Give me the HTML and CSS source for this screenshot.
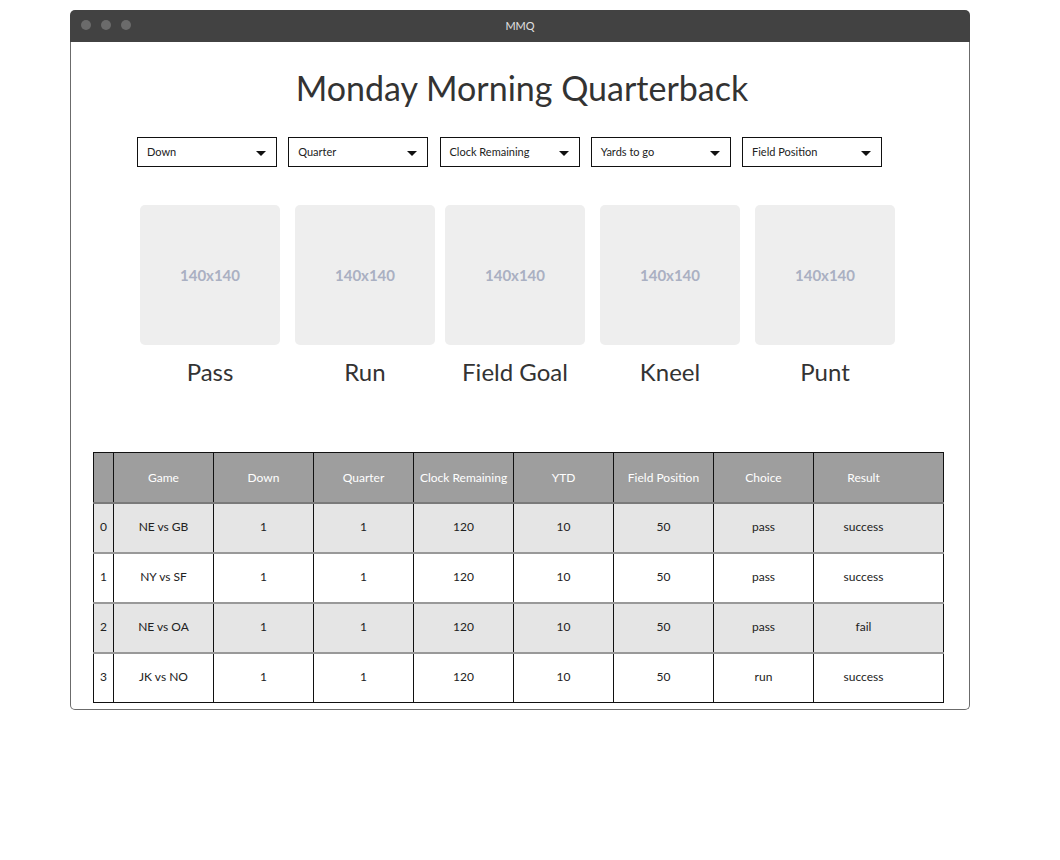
FILE: index.html
```html
<!DOCTYPE html>
<html>
<head>
<meta charset="utf-8">
<title>MMQ</title>
<link rel="stylesheet" href="styles.css">
</head>
<body>
<div class="window">
  <div class="titlebar">
    <div class="dots"><span class="dot"></span><span class="dot"></span><span class="dot"></span></div>
    <div class="wtitle">MMQ</div>
  </div>
  <div class="content">
    <h1 class="heading">Monday Morning Quarterback</h1>
    <div class="filters">
      <div class="select"><span>Down</span><i class="caret"></i></div>
      <div class="select"><span>Quarter</span><i class="caret"></i></div>
      <div class="select"><span>Clock Remaining</span><i class="caret"></i></div>
      <div class="select"><span>Yards to go</span><i class="caret"></i></div>
      <div class="select"><span>Field Position</span><i class="caret"></i></div>
    </div>
    <div class="choices">
      <div class="choice"><div class="thumb">140x140</div><div class="label">Pass</div></div>
      <div class="choice"><div class="thumb">140x140</div><div class="label">Run</div></div>
      <div class="choice narrow"><div class="thumb">140x140</div><div class="label">Field Goal</div></div>
      <div class="choice"><div class="thumb">140x140</div><div class="label">Kneel</div></div>
      <div class="choice"><div class="thumb">140x140</div><div class="label">Punt</div></div>
    </div>
    <table class="plays">
      <thead>
        <tr><th class="idx"></th><th>Game</th><th>Down</th><th>Quarter</th><th>Clock Remaining</th><th>YTD</th><th>Field Position</th><th>Choice</th><th class="last">Result</th></tr>
      </thead>
      <tbody>
        <tr class="alt"><td class="idx">0</td><td>NE vs GB</td><td>1</td><td>1</td><td>120</td><td>10</td><td>50</td><td>pass</td><td class="last">success</td></tr>
        <tr><td class="idx">1</td><td>NY vs SF</td><td>1</td><td>1</td><td>120</td><td>10</td><td>50</td><td>pass</td><td class="last">success</td></tr>
        <tr class="alt"><td class="idx">2</td><td>NE vs OA</td><td>1</td><td>1</td><td>120</td><td>10</td><td>50</td><td>pass</td><td class="last">fail</td></tr>
        <tr class="lastrow"><td class="idx">3</td><td>JK vs NO</td><td>1</td><td>1</td><td>120</td><td>10</td><td>50</td><td>run</td><td class="last">success</td></tr>
      </tbody>
    </table>
  </div>
</div>
</body>
</html>
```

FILE: styles.css
```css
html, body {
  margin: 0;
  padding: 0;
  background: #ffffff;
}
body {
  font-family: "Lato", "Open Sans", "Liberation Sans", sans-serif;
  color: #333333;
  padding-top: 10px;
}
.window {
  width: 900px;
  margin-left: 70px;
}
.titlebar {
  height: 32px;
  background: #424242;
  border-radius: 5px 5px 0 0;
  position: relative;
  display: flex;
  align-items: center;
  justify-content: center;
}
.dots {
  position: absolute;
  left: 11px;
  top: 10px;
  display: flex;
  gap: 10px;
}
.dot {
  width: 10px;
  height: 10px;
  border-radius: 50%;
  background: #6b6b6b;
}
.wtitle {
  color: #e0e0e0;
  font-size: 11px;
  margin-top: -2px;
}
.content {
  height: 668px;
  border: 1px solid #6b6b6b;
  border-top: none;
  border-radius: 0 0 5px 5px;
  box-sizing: border-box;
  padding-top: 24px;
}
.heading {
  margin: 0;
  font-weight: normal;
  font-size: 34px;
  line-height: 44px;
  text-align: center;
  color: #333333;
  padding-left: 4px;
}
.filters {
  display: flex;
  gap: 11.25px;
  margin-top: 27px;
  padding-left: 66px;
}
.select {
  width: 140px;
  height: 30px;
  box-sizing: border-box;
  border: 1px solid #111111;
  display: flex;
  align-items: center;
  justify-content: space-between;
  padding: 0 10px 2px 9px;
  font-size: 11px;
  color: #222222;
}
.caret {
  width: 0;
  height: 0;
  border-left: 5px solid transparent;
  border-right: 5px solid transparent;
  border-top: 5px solid #111111;
  margin-top: 4px;
}
.choices {
  display: flex;
  gap: 15px;
  margin-top: 38px;
  padding-left: 69px;
}
.choice {
  width: 140px;
  display: flex;
  flex-direction: column;
  align-items: center;
}
.choice.narrow {
  margin-left: -5px;
}
.thumb {
  width: 140px;
  height: 140px;
  background: #eeeeee;
  border-radius: 5px;
  display: flex;
  align-items: center;
  justify-content: center;
  color: #aab0c2;
  font-size: 15px;
  font-weight: bold;
}
.label {
  margin-top: 12px;
  font-size: 24px;
  line-height: 30px;
  color: #333333;
}
.plays {
  margin-top: 65px;
  margin-left: 22px;
  border-collapse: collapse;
  width: 851px;
  table-layout: fixed;
  font-size: 12px;
  color: #222222;
  border: 1px solid #111111;
}
.plays th, .plays td {
  width: 100px;
  height: 50px;
  padding: 0;
  text-align: center;
  border-left: 1px solid #111111;
  border-right: 1px solid #111111;
  box-sizing: border-box;
}
.plays th {
  background: #9e9e9e;
  color: #ffffff;
  font-weight: normal;
  border-bottom: 2px solid #7a7a7a;
}
.plays td {
  border-bottom: 2px solid #999999;
  padding-bottom: 3px;
}
.plays tr.lastrow td {
  border-bottom: 1px solid #111111;
}
.plays .idx {
  width: 20px;
}
.plays .last {
  width: 130px;
  padding-right: 30px;
}
.plays tr.alt td {
  background: #e5e5e5;
}
```
